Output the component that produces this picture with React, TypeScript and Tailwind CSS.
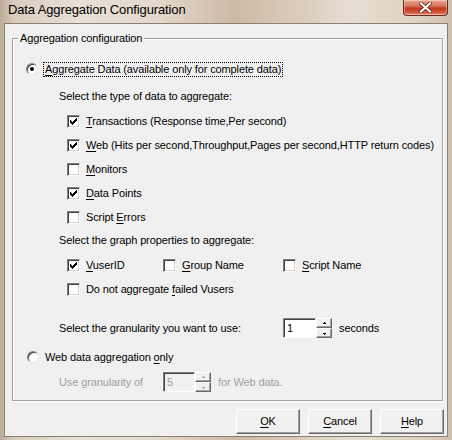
import React from "react";

const FONT = { fontFamily: '"Liberation Sans", Arial, sans-serif' };

function U({ children }: { children: React.ReactNode }) {
  return <span className="underline underline-offset-[2px] decoration-[1px]">{children}</span>;
}

const CHECK_PIXELS: [number, number, number][] = [
  [0, 6, 1],
  [1, 5, 2],
  [2, 0, 1],
  [2, 4, 3],
  [3, 0, 2],
  [3, 3, 3],
  [4, 0, 5],
  [5, 1, 3],
  [6, 2, 1],
];

function Check({ checked }: { checked?: boolean }) {
  return (
    <div className="w-[13px] h-[13px] shrink-0 bg-white border border-t-[#808080] border-l-[#808080] border-b-white border-r-white shadow-[inset_1px_1px_0_#404040,inset_-1px_-1px_0_#d4d0c8] flex items-center justify-center">
      {checked && (
        <svg width="7" height="7" viewBox="0 0 7 7" shapeRendering="crispEdges">
          {CHECK_PIXELS.map(([y, x, w], i) => (
            <rect key={i} x={x} y={y} width={w} height={1} fill="#000" />
          ))}
        </svg>
      )}
    </div>
  );
}

function Radio({ checked }: { checked?: boolean }) {
  return (
    <div className="w-[12px] h-[12px] shrink-0 rounded-full bg-white border border-t-[#808080] border-l-[#808080] border-r-[#e8e8e8] border-b-[#e8e8e8] shadow-[inset_1px_1px_0_#404040] flex items-center justify-center">
      {checked && <div className="w-[4px] h-[4px] rounded-full bg-black" />}
    </div>
  );
}

function Arrow({ up, disabled }: { up?: boolean; disabled?: boolean }) {
  return (
    <svg width="5" height="3" viewBox="0 0 5 3" shapeRendering="crispEdges">
      {up ? (
        <>
          <rect x="2" y="0" width="1" height="1" fill={disabled ? "#a0a0a0" : "#000"} />
          <rect x="1" y="1" width="3" height="1" fill={disabled ? "#a0a0a0" : "#000"} />
        </>
      ) : (
        <>
          <rect x="1" y="1" width="3" height="1" fill={disabled ? "#a0a0a0" : "#000"} />
          <rect x="2" y="2" width="1" height="1" fill={disabled ? "#a0a0a0" : "#000"} />
        </>
      )}
    </svg>
  );
}

function SpinBtn({ up, disabled }: { up?: boolean; disabled?: boolean }) {
  return (
    <div className="flex-1 bg-[#f0f0f0] border border-t-white border-l-white border-r-[#696969] border-b-[#696969] shadow-[inset_-1px_-1px_0_#a0a0a0] flex items-center justify-center">
      <Arrow up={up} disabled={disabled} />
    </div>
  );
}

function Spin({ value, disabled, w }: { value: string; disabled?: boolean; w: string }) {
  return (
    <div className="flex h-[20px] shrink-0">
      <div
        className={`${w} h-full border border-t-[#808080] border-l-[#808080] border-b-white border-r-white shadow-[inset_1px_1px_0_#404040] flex items-center pl-[3px] ${
          disabled ? "bg-[#f0f0f0] text-[#a0a0a0]" : "bg-white text-black"
        }`}
      >
        {value}
      </div>
      <div className="w-[16px] h-full flex flex-col">
        <SpinBtn up disabled={disabled} />
        <SpinBtn disabled={disabled} />
      </div>
    </div>
  );
}

function Button({ children }: { children: React.ReactNode }) {
  return (
    <div className="w-[64px] h-[25px] bg-[#f0f0f0] border border-t-white border-l-white border-r-[#696969] border-b-[#696969] shadow-[inset_-1px_-1px_0_#a0a0a0] flex items-center justify-center">
      {children}
    </div>
  );
}

function CheckRow({ checked, children }: { checked?: boolean; children: React.ReactNode }) {
  return (
    <div className="flex items-center">
      <Check checked={checked} />
      <span className="ml-[6px] whitespace-nowrap">{children}</span>
    </div>
  );
}

export default function App() {
  return (
    <div
      style={FONT}
      className="w-[452px] h-[440px] overflow-hidden flex flex-col bg-[linear-gradient(90deg,#bcab98_0%,#d9ccbe_3%,#e8e0d6_18%,#e3d8cc_35%,#cdb9a5_52%,#d6c6b4_62%,#e6ddd2_78%,#ded2c4_92%,#d0bfae_100%)]"
    >
      {/* Title bar */}
      <div className="h-[23px] flex items-start justify-between shrink-0">
        <div className="pl-[8px] pt-[2px] text-[13px] tracking-[-0.13px] text-black leading-[16px]">
          Data Aggregation Configuration
        </div>
        <div className="mr-[4px] w-[45px] h-[16px] rounded-b-[4px] border border-t-0 border-[#6b2a1f] bg-[linear-gradient(180deg,#e9a891_0%,#d8735b_40%,#c0391f_55%,#d45a3a_85%,#e49a80_100%)] shadow-[inset_0_0_0_1px_rgba(255,255,255,0.35)] flex items-center justify-center">
          <svg width="13" height="11" viewBox="0 0 13 11">
            <path d="M2 1.5 L11 9.5 M11 1.5 L2 9.5" stroke="#5a1a10" strokeWidth="3.6" strokeLinecap="square" />
            <path d="M2 1.5 L11 9.5 M11 1.5 L2 9.5" stroke="#ffffff" strokeWidth="2.2" strokeLinecap="square" />
          </svg>
        </div>
      </div>

      {/* Client area */}
      <div className="ml-[4px] w-[444px] h-[414px] shrink-0 bg-[#f0f0f0] border border-[#8a8074] text-[11px] tracking-[-0.12px] text-black leading-[13px] flex flex-col">
        {/* Group box */}
        <div className="relative ml-[7px] mt-[14px] w-[431px] h-[363px] border border-[#a0a0a0] shadow-[inset_1px_1px_0_#fff,1px_1px_0_#fff] flex flex-col">
          <div className="absolute left-[5px] -top-[7px] px-[2px] bg-[#f0f0f0] leading-[13px]">
            Aggregation configuration
          </div>

          {/* Radio 1 */}
          <div className="mt-[18px] h-[24px] flex items-center pl-[13px]">
            <Radio checked />
            <span className="ml-[5px] border border-dotted border-black px-[1px] h-[15px] flex items-center whitespace-nowrap">
              <U>A</U>ggregate Data (available only for complete data)
            </span>
          </div>

          <div className="mt-[3px] h-[24px] flex items-center pl-[46px]">
            Select the type of data to aggregate:
          </div>

          <div className="mt-[1px] h-[24px] flex items-center pl-[54px]">
            <CheckRow checked>
              <U>T</U>ransactions (Response time,Per second)
            </CheckRow>
          </div>
          <div className="h-[24px] flex items-center pl-[54px]">
            <CheckRow checked>
              <U>W</U>eb (Hits per second,Throughput,Pages per second,HTTP return codes)
            </CheckRow>
          </div>
          <div className="h-[24px] flex items-center pl-[54px]">
            <CheckRow>
              <U>M</U>onitors
            </CheckRow>
          </div>
          <div className="h-[24px] flex items-center pl-[54px]">
            <CheckRow checked>
              <U>D</U>ata Points
            </CheckRow>
          </div>
          <div className="h-[24px] flex items-center pl-[54px]">
            <CheckRow>
              Script <U>E</U>rrors
            </CheckRow>
          </div>

          <div className="-mt-px h-[24px] flex items-center pl-[46px]">
            Select the graph properties to aggregate:
          </div>

          <div className="mt-[1px] h-[24px] flex items-center pl-[54px]">
            <div className="w-[96px]">
              <CheckRow checked>
                <U>V</U>userID
              </CheckRow>
            </div>
            <div className="w-[120px]">
              <CheckRow>
                <U>G</U>roup Name
              </CheckRow>
            </div>
            <CheckRow>
              <U>S</U>cript Name
            </CheckRow>
          </div>
          <div className="h-[24px] flex items-center pl-[54px]">
            <CheckRow>
              Do not aggregate <U>f</U>ailed Vusers
            </CheckRow>
          </div>

          <div className="mt-[15px] h-[24px] flex items-center pl-[46px]">
            <div className="w-[224px] whitespace-nowrap">Select the granularity you want to use:</div>
            <Spin value="1" w="w-[33px]" />
            <span className="ml-[7px]">seconds</span>
          </div>

          <div className="mt-[5px] h-[24px] flex items-center pl-[14px]">
            <Radio />
            <span className="ml-[6px] whitespace-nowrap">
              Web data aggregation <U>o</U>nly
            </span>
          </div>

          <div className="mt-[1px] h-[24px] flex items-center pl-[46px] text-[#a0a0a0]">
            <div className="w-[104px] whitespace-nowrap">Use granularity of</div>
            <Spin value="5" w="w-[32px]" disabled />
            <span className="ml-[7px] whitespace-nowrap">for Web data.</span>
          </div>
        </div>

        {/* Buttons */}
        <div className="mt-[8px] flex justify-end gap-[8px] pr-[3px]">
          <Button>
            <U>O</U>K
          </Button>
          <Button>
            <U>C</U>ancel
          </Button>
          <Button>
            <U>H</U>elp
          </Button>
        </div>
      </div>
    </div>
  );
}
